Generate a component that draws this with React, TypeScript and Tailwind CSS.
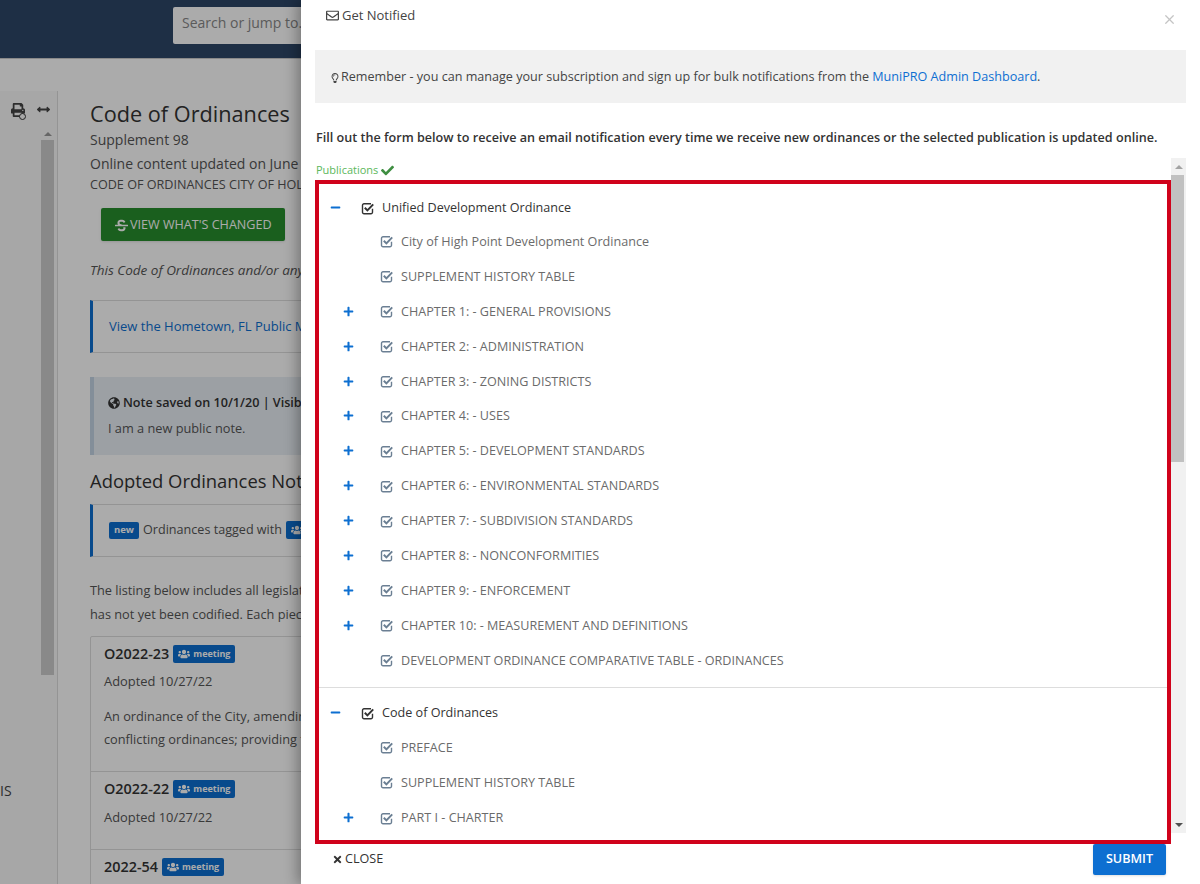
import React from "react";
import {
  FaArrowsAltH,
  FaCheck,
  FaGlobeAmericas,
  FaMinus,
  FaPlus,
  FaPrint,
  FaRegEnvelope,
  FaRegLightbulb,
  FaStrikethrough,
  FaTimes,
  FaUsers,
} from "react-icons/fa";
import { X } from "lucide-react";

interface TreeRow {
  label: string;
  expandable?: boolean;
}

const developmentRows: TreeRow[] = [
  { label: "City of High Point Development Ordinance" },
  { label: "SUPPLEMENT HISTORY TABLE" },
  { label: "CHAPTER 1: - GENERAL PROVISIONS", expandable: true },
  { label: "CHAPTER 2: - ADMINISTRATION", expandable: true },
  { label: "CHAPTER 3: - ZONING DISTRICTS", expandable: true },
  { label: "CHAPTER 4: - USES", expandable: true },
  { label: "CHAPTER 5: - DEVELOPMENT STANDARDS", expandable: true },
  { label: "CHAPTER 6: - ENVIRONMENTAL STANDARDS", expandable: true },
  { label: "CHAPTER 7: - SUBDIVISION STANDARDS", expandable: true },
  { label: "CHAPTER 8: - NONCONFORMITIES", expandable: true },
  { label: "CHAPTER 9: - ENFORCEMENT", expandable: true },
  { label: "CHAPTER 10: - MEASUREMENT AND DEFINITIONS", expandable: true },
  { label: "DEVELOPMENT ORDINANCE COMPARATIVE TABLE - ORDINANCES" },
];

const codeRows: TreeRow[] = [
  { label: "PREFACE" },
  { label: "SUPPLEMENT HISTORY TABLE" },
  { label: "PART I - CHARTER", expandable: true },
];

// square with the heavy tick that pokes out of its top right corner
const CheckIcon = ({ className }: { className: string }) => (
  <svg viewBox="0 0.8 14 14" className={`w-[14px] h-[14px] shrink-0 ${className}`} fill="none" stroke="currentColor">
    <path d="M11.5 7.5V11a1.5 1.5 0 0 1-1.5 1.5H3A1.5 1.5 0 0 1 1.5 11V4A1.5 1.5 0 0 1 3 2.5h7" strokeWidth="1.4" />
    <path d="M3.8 6.6L6.4 9.2L12.2 3.2" strokeWidth="2" />
  </svg>
);

const MeetingBadge = () => (
  <span className="inline-flex items-center gap-[3px] h-[18px] px-[5px] rounded-[2px] bg-[#0d6fd1] text-white text-[9px] font-bold">
    <FaUsers className="text-[12px]" />
    meeting
  </span>
);

const Callout = ({ children }: { children: React.ReactNode }) => (
  <div className="h-[53px] flex items-center pl-[16px] border border-[#ddd] border-l-[3px] border-l-[#0d6fd1]">
    {children}
  </div>
);

const OrdinanceCard = ({
  name,
  children,
  height,
}: {
  name: string;
  children?: React.ReactNode;
  height: string;
}) => (
  <div className={`${height} px-[13px] pt-[5px] border-b border-[#ddd]`}>
    <div className="flex items-center gap-[4px] h-[24px]">
      <span className="text-[14.4px] font-semibold text-[#333]">{name}</span>
      <MeetingBadge />
    </div>
    {children}
  </div>
);

const BackgroundPage = () => (
  <div className="h-[884px] overflow-hidden bg-white whitespace-nowrap text-[14px] text-[#555]">
    <div className="h-[59px] bg-[#2e4668] pl-[173px] pt-[7px] border-b border-[#ccc]">
      <div className="w-[300px] h-[37px] bg-white rounded-[2px] pl-[9px] leading-[32px] text-[14px] text-[#888]">
        Search or jump to...
      </div>
    </div>
    <div className="flex h-[825px] pt-[32px]">
      <aside className="w-[58px] shrink-0 border-r border-[#ddd] bg-[#fafafa] text-[#444]">
        <div className="flex justify-end items-center gap-[12px] pr-[7px] pt-[3px] h-[34px]">
          <span className="relative">
            <FaPrint className="text-[14px]" />
            <span className="absolute -right-[1px] -bottom-[3px] w-[7px] h-[7px] rounded-full border border-[#333] bg-[#fafafa]" />
          </span>
          <FaArrowsAltH className="text-[13px]" />
        </div>
        <div className="ml-[41px] mr-[3px] mt-[3px] h-[12px] flex justify-center items-center">
          <div className="w-0 h-0 border-x-[4px] border-x-transparent border-b-[4px] border-b-[#999]" />
        </div>
        <div className="ml-[41px] mr-[3px] h-[535px] bg-[#cdcdcd]" />
        <div className="mt-[105px] text-[14px]">IS</div>
      </aside>
      <main className="pl-[32px] w-[900px] shrink-0">
        <h1 className="text-[21.7px] leading-[30px] pt-[8px] text-[#333]">Code of Ordinances</h1>
        <p className="leading-[20px] mt-[1px]">Supplement 98</p>
        <p className="leading-[20px] mt-[4px]">Online content updated on June 1, 2023</p>
        <p className="text-[12.6px] leading-[18px] mt-[2px]">CODE OF ORDINANCES CITY OF HOLLY SPRINGS</p>
        <button className="flex items-center gap-[2px] ml-[11px] mt-[14px] w-[184px] h-[33px] pl-[14px] pt-[1px] rounded-[2px] bg-[#278e2d] text-white text-[12.6px] font-medium shadow">
          <FaStrikethrough className="text-[13px]" />
          VIEW WHAT'S CHANGED
        </button>
        <p className="italic text-[13.5px] leading-[20px] mt-[19px]">This Code of Ordinances and/or any other documents</p>
        <div className="mt-[20px]">
          <Callout>
            <span className="text-[13px] text-[#0d6fd1]">View the Hometown, FL Public Meetings</span>
          </Callout>
        </div>
        <div className="mt-[24px] h-[78px] bg-[#e9eff5] border-l-[4px] border-l-[#c4d4e4] pl-[14px] pt-[17px] text-[12.75px]">
          <div className="flex items-center gap-[3px] font-semibold text-[#333] text-[12.6px]">
            <FaGlobeAmericas className="text-[12px]" />
            Note saved on 10/1/20 | Visible to all users
          </div>
          <p className="mt-[6px]">I am a new public note.</p>
        </div>
        <h2 className="text-[18.4px] font-medium leading-[24px] mt-[14px] text-[#333]">Adopted Ordinances Not Yet Codified</h2>
        <div className="mt-[11px]">
          <Callout>
            <span className="flex items-center gap-[4px] text-[12.6px]">
              <span className="inline-flex items-center h-[17px] px-[5px] rounded-[2px] bg-[#0d6fd1] text-white text-[9.5px] font-bold">new</span>
              Ordinances tagged with
              <MeetingBadge />
            </span>
          </Callout>
        </div>
        <p className="text-[12.75px] leading-[24px] mt-[21px]">The listing below includes all legislation adopted</p>
        <p className="text-[12.75px] leading-[24px]">has not yet been codified. Each piece of legislation</p>
        <div className="mt-[10px] border border-[#ddd] rounded-[2px]">
          <OrdinanceCard name="O2022-23" height="h-[135px]">
            <p className="text-[12.9px] leading-[20px] mt-[5px]">Adopted 10/27/22</p>
            <p className="text-[12.75px] leading-[23px] mt-[14px]">An ordinance of the City, amending the code</p>
            <p className="text-[12.75px] leading-[23px]">conflicting ordinances; providing for severability</p>
          </OrdinanceCard>
          <OrdinanceCard name="O2022-22" height="h-[78px]">
            <p className="text-[12.9px] leading-[20px] mt-[6px]">Adopted 10/27/22</p>
          </OrdinanceCard>
          <OrdinanceCard name="2022-54" height="h-[78px]" />
        </div>
      </main>
    </div>
  </div>
);

const Row = ({ label, expandable, rowHeight }: TreeRow & { rowHeight: string }) => (
  <div className={`flex items-center ${rowHeight}`}>
    <span className="w-[61px] pl-[24px] shrink-0 text-[#0d6fd1] -translate-y-px">
      {expandable && <FaPlus className="text-[11px]" />}
    </span>
    <CheckIcon className="text-[#6b7f93]" />
    <span className="ml-[7px] text-[12.6px] text-[#6b6b6b]">{label}</span>
  </div>
);

const Group = ({
  title,
  rows,
  headHeight,
  rowHeight,
}: {
  title: string;
  rows: TreeRow[];
  headHeight: string;
  rowHeight: string;
}) => (
  <div>
    <div className={`flex items-center ${headHeight}`}>
      <span className="w-[42px] pl-[11px] shrink-0 text-[#0d6fd1] -translate-y-px">
        <FaMinus className="text-[11px]" />
      </span>
      <CheckIcon className="text-[#333]" />
      <span className="ml-[7px] text-[12.6px] text-[#333]">{title}</span>
    </div>
    {rows.map((row) => (
      <Row key={row.label} {...row} rowHeight={rowHeight} />
    ))}
  </div>
);

const Drawer = () => (
  <div className="absolute top-0 right-0 bottom-0 w-[899px] bg-white pl-[14px] text-[12.6px] text-[#333] shadow-[-4px_0_12px_rgba(0,0,0,0.3)]">
    <div className="flex items-center justify-between h-[50px] pb-[19px] pl-[11px] pr-[23px]">
      <span className="flex items-center gap-[3px] text-[#444] text-[13px]">
        <FaRegEnvelope className="text-[13px]" />
        Get Notified
      </span>
      <X size={15} strokeWidth={2} className="mt-[7px] text-[#c4c4c4]" />
    </div>
    <div className="mr-[14px] h-[53px] bg-[#f1f1f1] flex items-center pl-[15px] pt-[2px] text-[#444]">
      <FaRegLightbulb className="text-[10px] mr-[1px]" />
      Remember - you can manage your subscription and sign up for bulk notifications from the&nbsp;
      <span className="text-[#0d6fd1]">MuniPRO Admin Dashboard</span>.
    </div>
    <p className="mt-[26px] leading-[18px] font-semibold text-[#333] pl-[1px]">
      Fill out the form below to receive an email notification every time we receive new ordinances or the selected publication is updated online.
    </p>
    <div className="flex mt-[11px] h-[686px] mr-[14px]">
      <div className="flex-1 min-w-0 flex flex-col">
        <div className="h-[22px] pt-[2px] flex items-center gap-[3px] text-[11px] text-[#5cb85c] pl-[1px]">
          Publications
          <FaCheck className="text-[13px] text-[#3e8e41]" />
        </div>
        <div className="h-[664px] overflow-hidden border-4 border-[#d0021b] pt-[8px]">
          <Group title="Unified Development Ordinance" rows={developmentRows} headHeight="h-[33px]" rowHeight="h-[34.9px]" />
          <div className="h-px bg-[#ddd] mt-[8px] mb-[9px]" />
          <Group title="Code of Ordinances" rows={codeRows} headHeight="h-[34px]" rowHeight="h-[35.2px]" />
        </div>
      </div>
      <div className="w-[15px] h-[675px] bg-[#f1f1f1] flex flex-col shrink-0">
        <div className="h-[17px] flex items-center justify-center">
          <div className="w-0 h-0 border-x-[4px] border-x-transparent border-b-[4px] border-b-[#a3a3a3]" />
        </div>
        <div className="h-[287px] w-[13px] bg-[#c1c1c1]" />
        <div className="flex-1 flex items-end justify-center pb-[6px]">
          <div className="w-0 h-0 border-x-[4px] border-x-transparent border-t-[4px] border-t-[#505050]" />
        </div>
      </div>
    </div>
    <div className="flex items-center justify-between pl-[17px] pr-[34px]">
      <span className="flex items-center gap-[2px] text-[#333]">
        <FaTimes className="text-[11px]" />
        CLOSE
      </span>
      <button className="w-[73px] h-[31px] bg-[#0d6fd1] text-white font-semibold rounded-[2px] shadow">SUBMIT</button>
    </div>
  </div>
);

export default function App() {
  return (
    <div className="relative h-[884px] overflow-hidden font-['Open_Sans',sans-serif]">
      <BackgroundPage />
      <div className="absolute inset-0 bg-black/[0.33]" />
      <Drawer />
    </div>
  );
}
